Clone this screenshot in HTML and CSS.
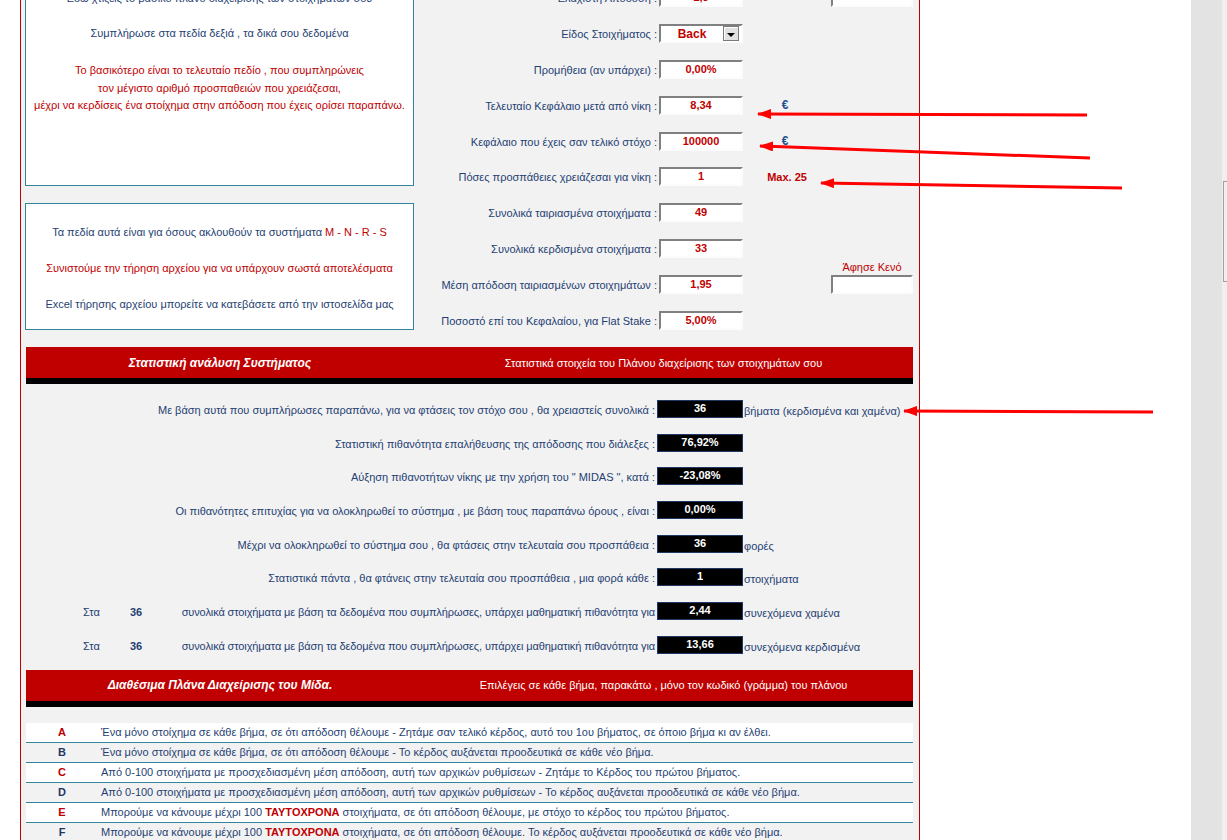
FILE: index.html
```html
<!DOCTYPE html>
<html lang="el">
<head>
<meta charset="utf-8">
<title>Πλάνο Διαχείρισης MIDAS</title>
<link rel="stylesheet" href="styles.css">
</head>
<body>
<div class="screen">
  <div class="page">
    <div class="scroll">
      <section class="top">
        <div class="left-col">
          <div class="note note-main">
            <p>Εδώ χτίζεις το βασικό πλάνο διαχείρισης των στοιχημάτων σου</p>
            <p class="l2">Συμπλήρωσε στα πεδία δεξιά , τα δικά σου δεδομένα</p>
            <p class="l3 red">Το βασικότερο είναι το τελευταίο πεδίο , που συμπληρώνεις<br>τον μέγιστο αριθμό προσπαθειών που χρειάζεσαι,<br>μέχρι να κερδίσεις ένα στοίχημα στην απόδοση που έχεις ορίσει παραπάνω.</p>
          </div>
          <div class="note note-sys">
            <p>Τα πεδία αυτά είναι για όσους ακλουθούν τα συστήματα <span class="red">M - N - R - S</span></p>
            <p class="red">Συνιστούμε την τήρηση αρχείου για να υπάρχουν σωστά αποτελέσματα</p>
            <p>Excel τήρησης αρχείου μπορείτε να κατεβάσετε από την ιστοσελίδα μας</p>
          </div>
        </div>
        <div class="form">
          <div class="frow"><span class="flabel">Ελάχιστη Απόδοση :</span><span class="field">1,5</span><span class="unit"></span><span class="aux"><span class="field wide"></span></span></div>
          <div class="frow"><span class="flabel">Είδος Στοιχήματος :</span><span class="field select"><span class="sel-text">Back</span><span class="sel-btn"><span class="tri"></span></span></span><span class="unit"></span><span class="aux"></span></div>
          <div class="frow"><span class="flabel">Προμήθεια (αν υπάρχει) :</span><span class="field">0,00%</span><span class="unit"></span><span class="aux"></span></div>
          <div class="frow"><span class="flabel">Τελευταίο Κεφάλαιο μετά από νίκη :</span><span class="field">8,34</span><span class="unit euro">€</span><span class="aux"></span></div>
          <div class="frow"><span class="flabel">Κεφάλαιο που έχεις σαν τελικό στόχο :</span><span class="field">100000</span><span class="unit euro">€</span><span class="aux"></span></div>
          <div class="frow"><span class="flabel">Πόσες προσπάθειες χρειάζεσαι για νίκη :</span><span class="field">1</span><span class="unit max">Max. 25</span><span class="aux"></span></div>
          <div class="frow"><span class="flabel">Συνολικά ταιριασμένα στοιχήματα :</span><span class="field">49</span><span class="unit"></span><span class="aux"></span></div>
          <div class="frow"><span class="flabel">Συνολικά κερδισμένα στοιχήματα :</span><span class="field">33</span><span class="unit"></span><span class="aux"></span></div>
          <div class="frow"><span class="flabel">Μέση απόδοση ταιριασμένων στοιχημάτων :</span><span class="field">1,95</span><span class="unit"></span><span class="aux stack"><span class="aux-label">Άφησε Κενό</span><span class="field wide"></span></span></div>
          <div class="frow"><span class="flabel">Ποσοστό επί του Κεφαλαίου, για Flat Stake :</span><span class="field">5,00%</span><span class="unit"></span><span class="aux"></span></div>
        </div>
      </section>

      <div class="bar bar-first">
        <span class="bar-title">Στατιστική ανάλυση Συστήματος</span>
        <span class="bar-sub">Στατιστικά στοιχεία του Πλάνου διαχείρισης των στοιχημάτων σου</span>
      </div>

      <section class="stats">
        <div class="srow"><span class="slabel">Με βάση αυτά που συμπλήρωσες παραπάνω, για να φτάσεις τον στόχο σου , θα χρειαστείς συνολικά :</span><span class="sval">36</span><span class="ssuf">βήματα (κερδισμένα και χαμένα)</span></div>
        <div class="srow"><span class="slabel">Στατιστική πιθανότητα επαλήθευσης της απόδοσης που διάλεξες :</span><span class="sval">76,92%</span><span class="ssuf"></span></div>
        <div class="srow"><span class="slabel">Αύξηση πιθανοτήτων νίκης με την χρήση του " MIDAS ", κατά :</span><span class="sval">-23,08%</span><span class="ssuf"></span></div>
        <div class="srow"><span class="slabel">Οι πιθανότητες επιτυχίας για να ολοκληρωθεί το σύστημα , με βάση τους παραπάνω όρους , είναι :</span><span class="sval">0,00%</span><span class="ssuf"></span></div>
        <div class="srow"><span class="slabel">Μέχρι να ολοκληρωθεί το σύστημα σου , θα φτάσεις στην τελευταία σου προσπάθεια :</span><span class="sval">36</span><span class="ssuf">φορές</span></div>
        <div class="srow"><span class="slabel">Στατιστικά πάντα , θα φτάνεις στην τελευταία σου προσπάθεια , μια φορά κάθε :</span><span class="sval">1</span><span class="ssuf">στοιχήματα</span></div>
        <div class="srow"><span class="slabel split"><span class="sta">Στα</span><span class="num">36</span><span class="stext">συνολικά στοιχήματα με βάση τα δεδομένα που συμπλήρωσες, υπάρχει μαθηματική πιθανότητα για</span></span><span class="sval">2,44</span><span class="ssuf">συνεχόμενα χαμένα</span></div>
        <div class="srow"><span class="slabel split"><span class="sta">Στα</span><span class="num">36</span><span class="stext">συνολικά στοιχήματα με βάση τα δεδομένα που συμπλήρωσες, υπάρχει μαθηματική πιθανότητα για</span></span><span class="sval">13,66</span><span class="ssuf">συνεχόμενα κερδισμένα</span></div>
      </section>

      <div class="bar bar-second">
        <span class="bar-title">Διαθέσιμα Πλάνα Διαχείρισης του Μίδα.</span>
        <span class="bar-sub">Επιλέγεις σε κάθε βήμα, παρακάτω , μόνο τον κωδικό (γράμμα) του πλάνου</span>
      </div>

      <section class="plans">
        <div class="plan"><span class="code red">A</span><span class="desc">Ένα μόνο στοίχημα σε κάθε βήμα, σε ότι απόδοση θέλουμε - Ζητάμε σαν τελικό κέρδος, αυτό του 1ου βήματος, σε όποιο βήμα κι αν έλθει.</span></div>
        <div class="plan"><span class="code">B</span><span class="desc">Ένα μόνο στοίχημα σε κάθε βήμα, σε ότι απόδοση θέλουμε - Το κέρδος αυξάνεται προοδευτικά σε κάθε νέο βήμα.</span></div>
        <div class="plan"><span class="code red">C</span><span class="desc">Από 0-100 στοιχήματα με προσχεδιασμένη μέση απόδοση, αυτή των αρχικών ρυθμίσεων - Ζητάμε το Κέρδος του πρώτου βήματος.</span></div>
        <div class="plan"><span class="code">D</span><span class="desc">Από 0-100 στοιχήματα με προσχεδιασμένη μέση απόδοση, αυτή των αρχικών ρυθμίσεων - Το κέρδος αυξάνεται προοδευτικά σε κάθε νέο βήμα.</span></div>
        <div class="plan"><span class="code red">E</span><span class="desc">Μπορούμε να κάνουμε μέχρι 100 <b class="red">ΤΑΥΤΟΧΡΟΝΑ</b> στοιχήματα, σε ότι απόδοση θέλουμε, με στόχο το κέρδος του πρώτου βήματος.</span></div>
        <div class="plan"><span class="code">F</span><span class="desc">Μπορούμε να κάνουμε μέχρι 100 <b class="red">ΤΑΥΤΟΧΡΟΝΑ</b> στοιχήματα, σε ότι απόδοση θέλουμε. Το κέρδος αυξάνεται προοδευτικά σε κάθε νέο βήμα.</span></div>
      </section>
    </div>
  </div>
  <div class="blank"></div>
  <div class="dock"></div>
  <div class="edge"><div class="bracket"></div></div>

  <svg class="arrows" width="1227" height="840" viewBox="0 0 1227 840" aria-hidden="true">
    <defs>
      <marker id="ah" markerUnits="userSpaceOnUse" markerWidth="14" markerHeight="10" refX="13" refY="5" orient="auto">
        <path d="M0,0 L14,5 L0,10 z" fill="#ff0000"/>
      </marker>
    </defs>
    <line x1="1087" y1="115" x2="758" y2="114" stroke="#ff0000" stroke-width="3" marker-end="url(#ah)"/>
    <line x1="1090" y1="158" x2="760" y2="146" stroke="#ff0000" stroke-width="3" marker-end="url(#ah)"/>
    <line x1="1122" y1="188" x2="821" y2="183" stroke="#ff0000" stroke-width="3" marker-end="url(#ah)"/>
    <line x1="1153" y1="412" x2="904" y2="411" stroke="#ff0000" stroke-width="3" marker-end="url(#ah)"/>
  </svg>
</div>
</body>
</html>
```

FILE: styles.css
```css
* { box-sizing: border-box; }
html, body { margin: 0; padding: 0; }
body {
  background: #fff;
  font-family: "Liberation Sans", Arial, sans-serif;
  font-size: 11px;
  color: #1f3f73;
}
.screen {
  position: relative;
  display: flex;
  width: 1227px;
  height: 840px;
  overflow: hidden;
}
.page {
  flex: none;
  margin-left: 20px;
  width: 900px;
  height: 840px;
  overflow: hidden;
  background: #f2f2f2;
  border-left: 1px solid #c00000;
  border-right: 1px solid #c00000;
}
.blank { flex: 1; }
.dock { flex: none; width: 31px; background: #e3e3e3; }
.edge { flex: none; width: 5px; background: #efefef; }
.bracket {
  margin: 181px 0 0 1px;
  width: 4px;
  height: 101px;
  border: 1px solid #a0a0a0;
  border-right: none;
}
.arrows { position: absolute; left: 0; top: 0; pointer-events: none; }

.red { color: #c00000; }

.scroll { margin-top: -20px; }

/* top section */
.top { display: flex; height: 358px; }
.left-col { margin-left: 4px; width: 389px; flex: none; }
.note {
  background: #fff;
  border: 1px solid #31859c;
  text-align: center;
}
.note p { margin: 0; }
.note-main { height: 206px; padding-top: 9px; line-height: 17.5px; }
.note-main .l2 { margin-top: 17.5px; }
.note-main .l3 { margin-top: 19.5px; }
.note-sys { margin-top: 17px; height: 127px; padding-top: 19px; line-height: 18px; }
.note-sys p + p { margin-top: 18px; }

.form { width: 499px; flex: none; }
.frow {
  display: grid;
  grid-template-columns: 245px 84px 88px 82px;
  grid-template-rows: 35.8px;
  height: 35.8px;
  align-items: center;
}
.flabel { text-align: right; padding-right: 2px; white-space: nowrap; padding-top: 1px; }
.field {
  display: block;
  height: 19px;
  background: #fff;
  border-top: 2px solid #808080;
  border-left: 2px solid #808080;
  border-right: 2px solid #fcfcfc;
  border-bottom: 2px solid #fcfcfc;
  color: #c00000;
  font-weight: bold;
  text-align: center;
  line-height: 15px;
}
.field.wide { width: 82px; }
.field.select { display: flex; align-items: center; }
.sel-text { flex: 1; text-align: center; font-size: 12px; padding-top: 1px; }
.sel-btn {
  width: 16px;
  height: 15px;
  margin-right: 2px;
  background: #e1e1e1;
  border: 1px solid #7a7a7a;
  box-shadow: inset 1px 1px 0 #fff;
  display: flex;
  align-items: center;
  justify-content: center;
}
.tri {
  width: 0;
  height: 0;
  margin-top: 2px;
  border-left: 4px solid transparent;
  border-right: 4px solid transparent;
  border-top: 4px solid #000;
}
.unit { text-align: center; font-weight: bold; }
.unit.euro { color: #1f4f8f; font-size: 12px; padding-bottom: 1px; padding-right: 4px; }
.unit.max { color: #c00000; }
.aux { display: block; }
.aux.stack {
  align-self: stretch;
  height: 35.8px;
  display: flex;
  flex-direction: column;
  justify-content: flex-end;
  align-items: center;
  padding-bottom: 8.4px;
}
.aux.stack > * { flex: none; }
.aux-label { color: #c00000; line-height: 16px; white-space: nowrap; }

/* bars */
.bar {
  display: grid;
  grid-template-columns: 388px 1fr;
  align-items: center;
  height: 37px;
  margin: 9px 6px 0 5px;
  background: #c00000;
  border-bottom: 6px solid #000;
  color: #fff;
  text-align: center;
}
.bar-title { font-style: italic; font-weight: bold; font-size: 12px; }
.bar-sub { font-size: 11px; }
.bar-second { margin-top: 8px; }

/* stats */
.stats { padding-top: 8px; }
.srow {
  display: grid;
  grid-template-columns: 636px 86px 1fr;
  grid-template-rows: 33.7px;
  height: 33.7px;
  align-items: center;
}
.slabel { text-align: right; padding-right: 2px; white-space: nowrap; padding-top: 2px; }
.slabel.split { display: flex; text-align: left; }
.sta { margin-left: 62px; width: 47px; flex: none; }
.num { width: 40px; flex: none; font-weight: bold; }
.stext { flex: 1; text-align: right; letter-spacing: -0.01em; }
.sval {
  height: 18px;
  background: #000;
  border: 1px solid #1f3864;
  color: #fff;
  font-weight: bold;
  text-align: center;
  line-height: 15px;
}
.ssuf { padding-left: 1px; padding-top: 4px; white-space: nowrap; }

/* plans */
.plans { margin: 16px 6px 0 5px; }
.plan {
  display: flex;
  align-items: center;
  height: 20px;
  border-bottom: 1px solid #31859c;
  white-space: nowrap;
}
.plan:nth-child(odd) { background: #fff; }
.code { width: 72px; flex: none; text-align: center; font-weight: bold; color: #1f3864; }
.code.red { color: #c00000; }
.desc { padding-left: 3px; }
```
